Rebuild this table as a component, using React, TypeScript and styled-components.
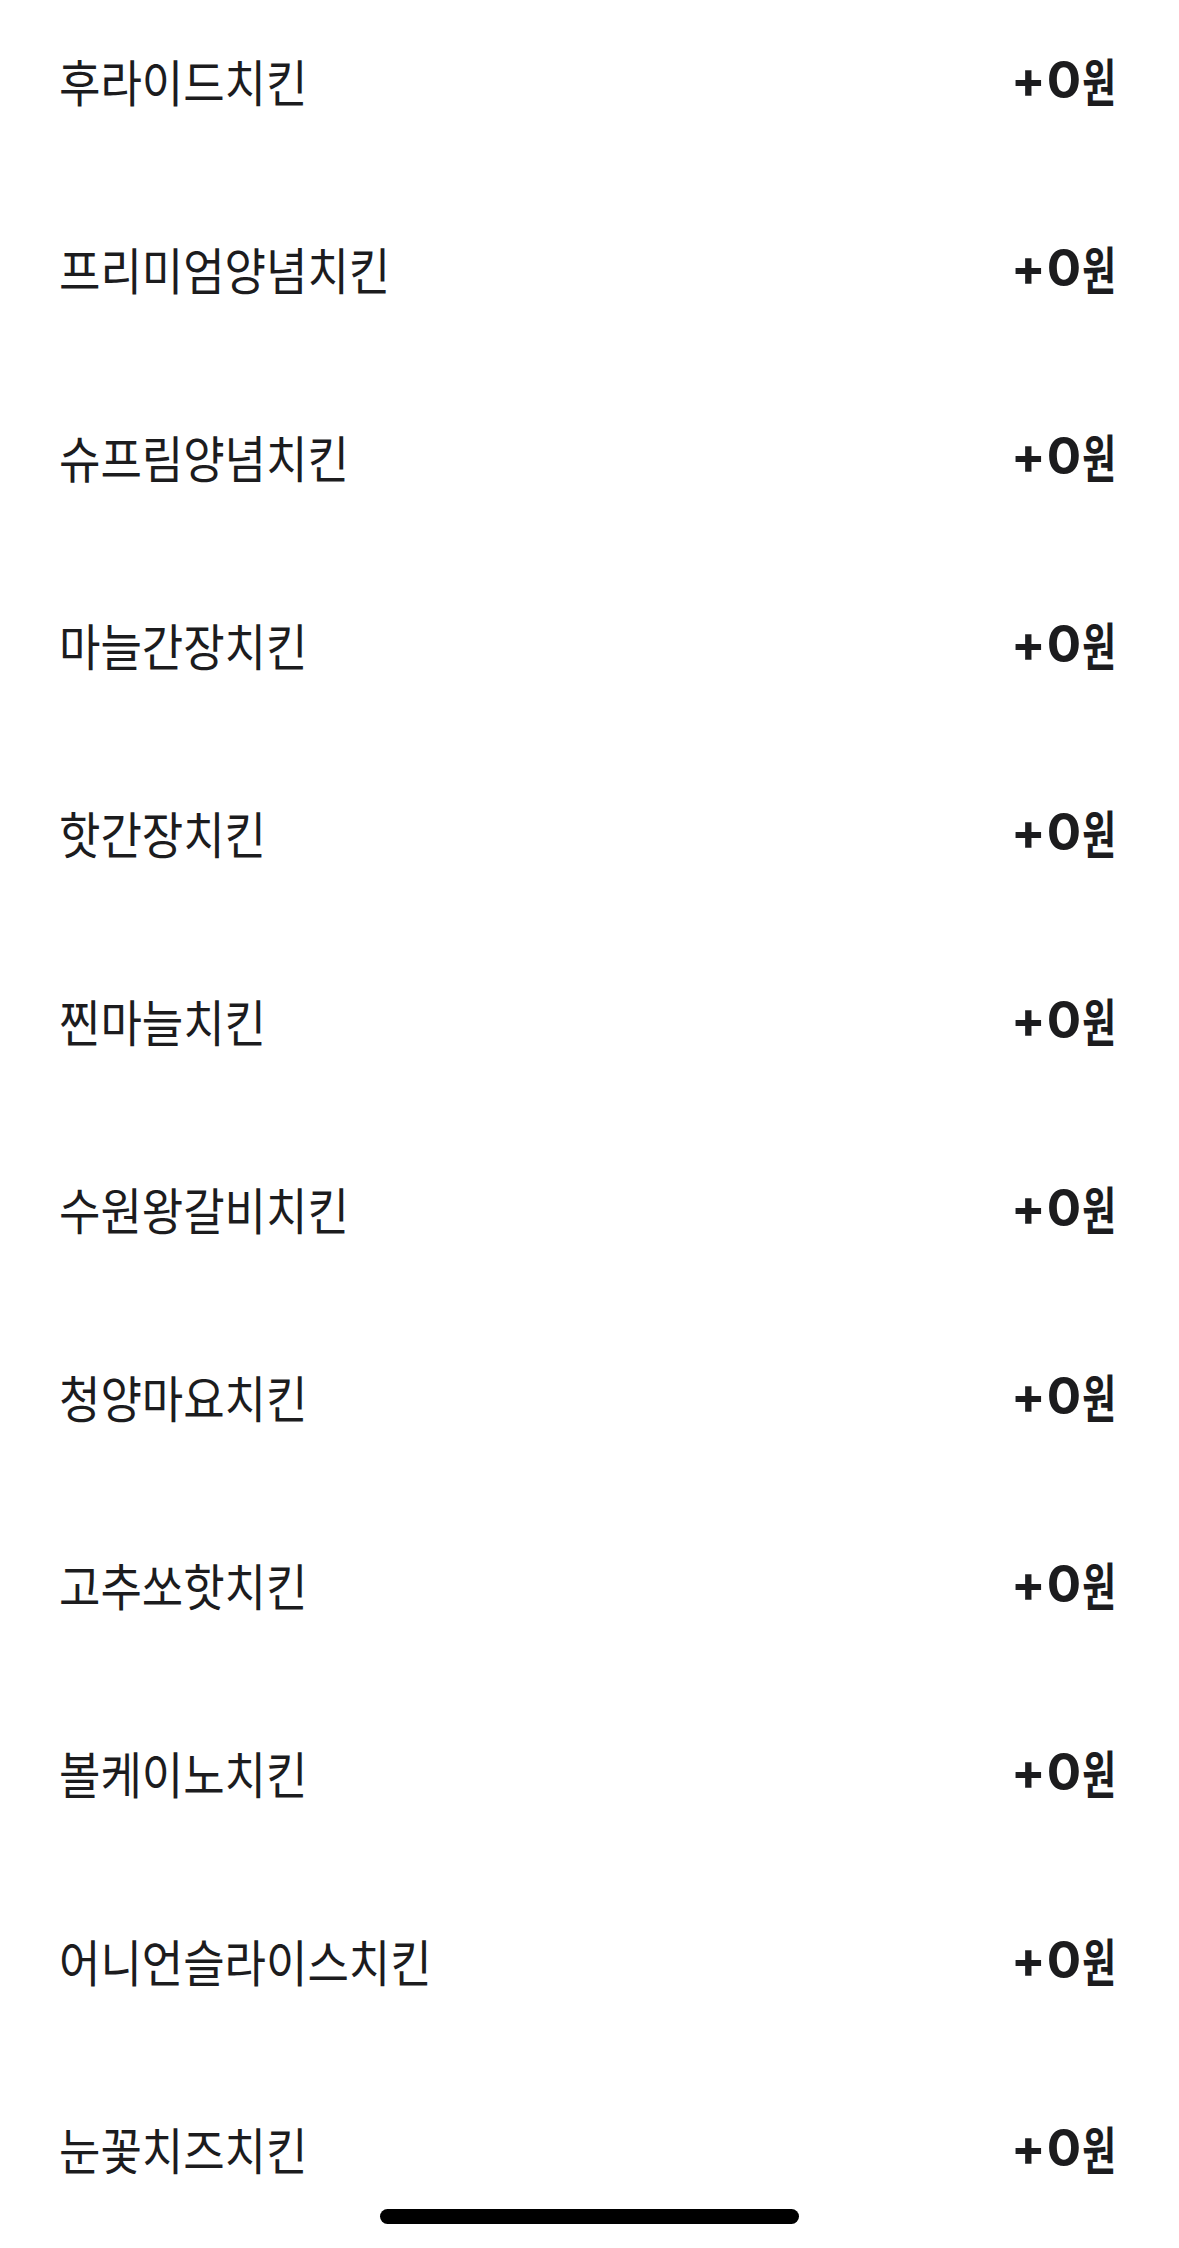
import React from "react";
import styled, { createGlobalStyle } from "styled-components";

const Global = createGlobalStyle`
  html, body { margin: 0; padding: 0; background: #ffffff; }
  body { font-family: "Inter", "Noto Sans CJK KR", sans-serif; -webkit-font-smoothing: antialiased; }
`;

const Screen = styled.div`
  position: relative;
  width: 1179px;
  height: 2248px;
  overflow: hidden;
  background: #ffffff;
`;

const List = styled.ul`
  list-style: none;
  margin: -14px 0 0 0;
  padding: 0;
  display: flex;
  flex-direction: column;
`;

const Row = styled.li`
  height: 188px;
  display: flex;
  align-items: center;
  justify-content: space-between;
  padding: 0 63px 0 59px;
`;

const Label = styled.span`
  display: inline-block;
  font-family: "Noto Sans CJK KR", sans-serif;
  font-size: 50px;
  font-weight: 400;
  line-height: 60px;
  color: #1c1c1e;
  white-space: nowrap;
  transform: scaleX(0.9);
  transform-origin: left center;
`;

const Price = styled.span`
  display: inline-flex;
  align-items: center;
  font-family: "Inter", "Noto Sans CJK KR", sans-serif;
  font-size: 51px;
  font-weight: 700;
  line-height: 60px;
  letter-spacing: 1px;
  color: #1c1c1e;
  white-space: nowrap;
`;

const Won = styled.span`
  display: inline-block;
  font-family: "Noto Sans CJK KR", sans-serif;
  font-weight: 700;
  letter-spacing: 0;
  margin-left: -13px;
  transform: scaleX(0.72);
  transform-origin: right center;
`;

const HomeIndicator = styled.div`
  position: absolute;
  left: 380px;
  top: 2209px;
  width: 419px;
  height: 15px;
  border-radius: 8px;
  background: #000000;
`;

const items = [
  "후라이드치킨",
  "프리미엄양념치킨",
  "슈프림양념치킨",
  "마늘간장치킨",
  "핫간장치킨",
  "찐마늘치킨",
  "수원왕갈비치킨",
  "청양마요치킨",
  "고추쏘핫치킨",
  "볼케이노치킨",
  "어니언슬라이스치킨",
  "눈꽃치즈치킨",
];

export default function App() {
  return (
    <Screen>
      <Global />
      <List>
        {items.map((name) => (
          <Row key={name}>
            <Label>{name}</Label>
            <Price>
              +0<Won>원</Won>
            </Price>
          </Row>
        ))}
      </List>
      <HomeIndicator />
    </Screen>
  );
}
